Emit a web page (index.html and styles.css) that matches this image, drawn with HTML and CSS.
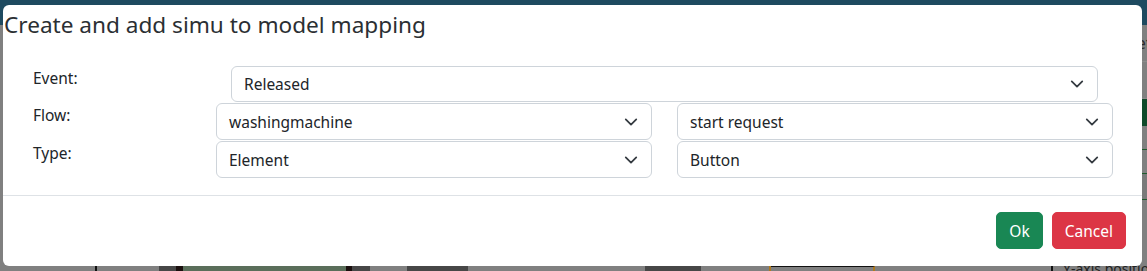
FILE: index.html
```html
<!DOCTYPE html>
<html lang="en">
<head>
<meta charset="utf-8">
<title>Create and add simu to model mapping</title>
<link rel="stylesheet" href="styles.css">
</head>
<body>
<div class="page">
  <div class="topbar"></div>
  <div class="main">
    <div class="content"></div>
    <aside class="sidebar">
      <div class="sb-item">Reset</div>
      <div class="sb-item">Edit</div>
      <div class="sb-green"></div>
      <div class="sb-row"></div>
      <div class="sb-row"></div>
      <div class="sb-row sb-row-last"></div>
    </aside>
  </div>
  <div class="strip">
    <span class="seg seg-a"></span>
    <span class="seg seg-b"></span>
    <span class="seg seg-c"></span>
    <span class="seg seg-d"></span>
    <span class="seg seg-e"></span>
    <span class="seg seg-f"></span>
    <span class="seg seg-g"></span>
    <span class="seg seg-h"></span>
    <span class="seg seg-i"></span>
    <span class="seg seg-j"></span>
    <span class="seg seg-k"></span>
    <span class="seg seg-l"></span>
    <span class="seg seg-m"></span>
    <span class="seg seg-o"></span>
    <span class="seg seg-n">Y-axis position</span>
  </div>
</div>

<div class="modal">
  <h5 class="modal-title">Create and add simu to model mapping</h5>
  <div class="modal-body">
    <div class="form-grid">
      <label class="lbl">Event:</label>
      <div class="select select-wide"><span>Released</span><svg class="chev" viewBox="0 0 16 16"><path d="M2 5l6 6 6-6"/></svg></div>

      <label class="lbl">Flow:</label>
      <div class="select"><span>washingmachine</span><svg class="chev" viewBox="0 0 16 16"><path d="M2 5l6 6 6-6"/></svg></div>
      <div class="select"><span>start request</span><svg class="chev" viewBox="0 0 16 16"><path d="M2 5l6 6 6-6"/></svg></div>

      <label class="lbl">Type:</label>
      <div class="select"><span>Element</span><svg class="chev" viewBox="0 0 16 16"><path d="M2 5l6 6 6-6"/></svg></div>
      <div class="select"><span>Button</span><svg class="chev" viewBox="0 0 16 16"><path d="M2 5l6 6 6-6"/></svg></div>
    </div>
  </div>
  <div class="modal-footer">
    <button class="btn btn-ok">Ok</button>
    <button class="btn btn-cancel">Cancel</button>
  </div>
</div>
</body>
</html>
```

FILE: styles.css
```css
* { box-sizing: border-box; }
html, body { margin: 0; padding: 0; }
body {
  width: 1147px;
  height: 271px;
  overflow: hidden;
  position: relative;
  background: #808080;
  font-family: "Noto Sans", "Open Sans", sans-serif;
  color: #212529;
}

/* dimmed page behind the modal */
.page {
  display: flex;
  flex-direction: column;
  height: 271px;
}
.topbar { height: 25px; background: #1e4a60; flex: none; }
.main { flex: 1; display: flex; }
.content { flex: 1; }
.sidebar {
  width: 97px;
  border-left: 2px solid #101010;
  display: flex;
  flex-direction: column;
  font-size: 16px;
  color: #2a2a2a;
}
.sb-item {
  height: 37px;
  line-height: 37px;
  padding-left: 58px;
  border-bottom: 1px solid #8c8c8c;
}
.sb-green { height: 27px; background: #0f4a2a; }
.sb-row { height: 24px; border-bottom: 1px solid #1f5a2c; }
.sb-row-last { height: 26px; background: #7a7a7a; }
.strip { height: 5px; display: flex; flex: none; }
.seg { display: block; height: 5px; background: #808080; flex: none; }
.seg-a { width: 95px; }
.seg-b { width: 64px; border-left: 2px solid #111; }
.seg-c { width: 17px; background: #474747; }
.seg-d { width: 7px; background: #1a0f0e; }
.seg-e { width: 163px; background: #5a6e5a; }
.seg-f { width: 6px; background: #1a0f0e; }
.seg-g { width: 18px; background: #474747; }
.seg-h { width: 37px; }
.seg-i { width: 61px; background: #474747; }
.seg-j { width: 177px; }
.seg-k { width: 56px; background: #474747; }
.seg-l { width: 70px; border-right: 2px solid #b07a1e; }
.seg-m { width: 104px; border-right: 2px solid #b07a1e; border-top: 1px solid #111; }
.seg-o { width: 176px; }
.seg-n { flex: 1; font-size: 14px; line-height: 5px; color: #222; padding-left: 10px; border-left: 2px solid #111; overflow: hidden; white-space: nowrap; }

/* modal */
.modal {
  position: absolute;
  left: 3px;
  top: 5px;
  width: 1139px;
  height: 261px;
  background: #fff;
  border-radius: 6px;
  display: flex;
  flex-direction: column;
}
.modal-title {
  margin: 0;
  padding: 6px 0 0 1px;
  height: 61px;
  font-size: 22.6px;
  font-weight: 400;
  line-height: 28px;
  color: #2b2f33;
}
.modal-body {
  padding: 0 28px 0 30px;
  height: 129px;
}
.form-grid {
  display: grid;
  grid-template-columns: 158px 436px 436px;
  column-gap: 25px;
  grid-template-rows: 36px 37px 37px;
  row-gap: 1px;
}
.lbl {
  font-size: 15.5px;
  line-height: 24px;
}
.select {
  display: flex;
  align-items: center;
  justify-content: space-between;
  border: 1px solid #ced4da;
  border-radius: 6px;
  padding: 0 13px 0 12px;
  font-size: 15.5px;
  color: #212529;
  background: #fff;
}
.select-wide {
  grid-column: 2 / 4;
  margin: 0 15px;
}
.chev {
  width: 14px;
  height: 14px;
  fill: none;
  stroke: #343a40;
  stroke-width: 2;
  stroke-linecap: round;
  stroke-linejoin: round;
}
.modal-footer {
  border-top: 1px solid #dee2e6;
  flex: 1;
  display: flex;
  justify-content: flex-end;
  align-items: flex-start;
  gap: 9px;
  padding: 16px 16px 0 0;
}
.btn {
  font-family: inherit;
  font-size: 15.5px;
  line-height: 24px;
  height: 37px;
  padding: 0 12px;
  border: 1px solid transparent;
  border-radius: 5px;
  color: #fff;
}
.btn-ok { background: #198754; border-color: #198754; }
.btn-cancel { background: #dc3545; border-color: #dc3545; }
```
